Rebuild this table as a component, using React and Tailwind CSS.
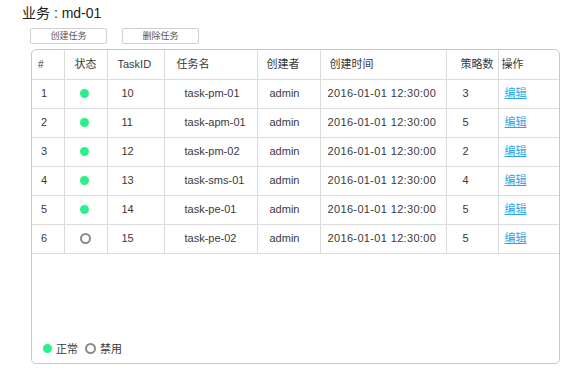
const ROWS = [
  { n: 1, on: true, id: 10, name: "task-pm-01", s: 3 },
  { n: 2, on: true, id: 11, name: "task-apm-01", s: 5 },
  { n: 3, on: true, id: 12, name: "task-pm-02", s: 2 },
  { n: 4, on: true, id: 13, name: "task-sms-01", s: 4 },
  { n: 5, on: true, id: 14, name: "task-pe-01", s: 5 },
  { n: 6, on: false, id: 15, name: "task-pe-02", s: 5 },
];

const Dot = ({ on }) =>
  on ? (
    <span className="inline-block h-[9px] w-[9px] rounded-full bg-[#2af08c]" />
  ) : (
    <span className="inline-block h-[11px] w-[11px] rounded-full border-2 border-[#8a8a8a]" />
  );

export default function App() {
  const td = "h-[29px] border-b border-r border-[#dcdcdc] align-middle";
  return (
    <div className="h-[392px] w-[578px] bg-white text-[#3a3a3a]" style={{ fontFamily: '"Liberation Sans", "Noto Sans CJK SC", sans-serif' }}>
      <div className="whitespace-pre pl-[22px] pt-[3px] text-[14px] leading-[20px] text-[#222]">业务 : md-01</div>
      <div className="mt-[5px] flex gap-[15px] pl-[30px]">
        <button className="h-[16px] w-[77px] rounded-[2px] border border-[#cfcfcf] bg-white text-[9px] leading-[14px] text-[#555]">创建任务</button>
        <button className="h-[16px] w-[77px] rounded-[2px] border border-[#cfcfcf] bg-white text-[9px] leading-[14px] text-[#555]">删除任务</button>
      </div>
      <div className="ml-[31px] mt-[5px] flex h-[315px] w-[529px] flex-col overflow-hidden rounded-[5px] border border-[#c8c8c8]">
        <table className="w-full table-fixed border-collapse text-[11px]">
          <colgroup>
            <col className="w-[32px]" />
            <col className="w-[43px]" />
            <col className="w-[57px]" />
            <col className="w-[93px]" />
            <col className="w-[63px]" />
            <col className="w-[126px]" />
            <col className="w-[52px]" />
            <col />
          </colgroup>
          <thead>
            <tr className="text-left font-normal">
              <th className={td + " pl-[6px] text-[10px] font-normal"}>#</th>
              <th className={td + " pl-[10px] font-normal"}>状态</th>
              <th className={td + " pl-[10px] font-normal"}>TaskID</th>
              <th className={td + " pl-[12px] font-normal"}>任务名</th>
              <th className={td + " pl-[9px] font-normal"}>创建者</th>
              <th className={td + " pl-[9px] font-normal"}>创建时间</th>
              <th className={td + " pl-[14px] font-normal"}>策略数</th>
              <th className={"h-[29px] border-b border-[#dcdcdc] pl-[3px] font-normal"}>操作</th>
            </tr>
          </thead>
          <tbody>
            {ROWS.map((r) => (
              <tr key={r.n}>
                <td className={td + " pl-[9px]"}>{r.n}</td>
                <td className={td + " pl-[15px]"}><div className="flex items-center"><Dot on={r.on} /></div></td>
                <td className={td + " pl-[14px]"}>{r.id}</td>
                <td className={td + " pl-[20px]"}>{r.name}</td>
                <td className={td + " pl-[12px]"}>admin</td>
                <td className={td + " pl-[7px] tracking-[0.35px]"}>2016-01-01 12:30:00</td>
                <td className={td + " pl-[16px]"}>{r.s}</td>
                <td className="h-[29px] border-b border-[#dcdcdc] pl-[6px]">
                  <a className="text-[#2ba6e6] underline decoration-[#2ba6e6]">编辑</a>
                </td>
              </tr>
            ))}
          </tbody>
        </table>
        <div className="flex-1" />
        <div className="flex items-center gap-[4px] pb-[6px] pl-[11px] text-[11px]">
          <Dot on />
          <span className="mr-[3px]">正常</span>
          <Dot on={false} />
          <span>禁用</span>
        </div>
      </div>
    </div>
  );
}
